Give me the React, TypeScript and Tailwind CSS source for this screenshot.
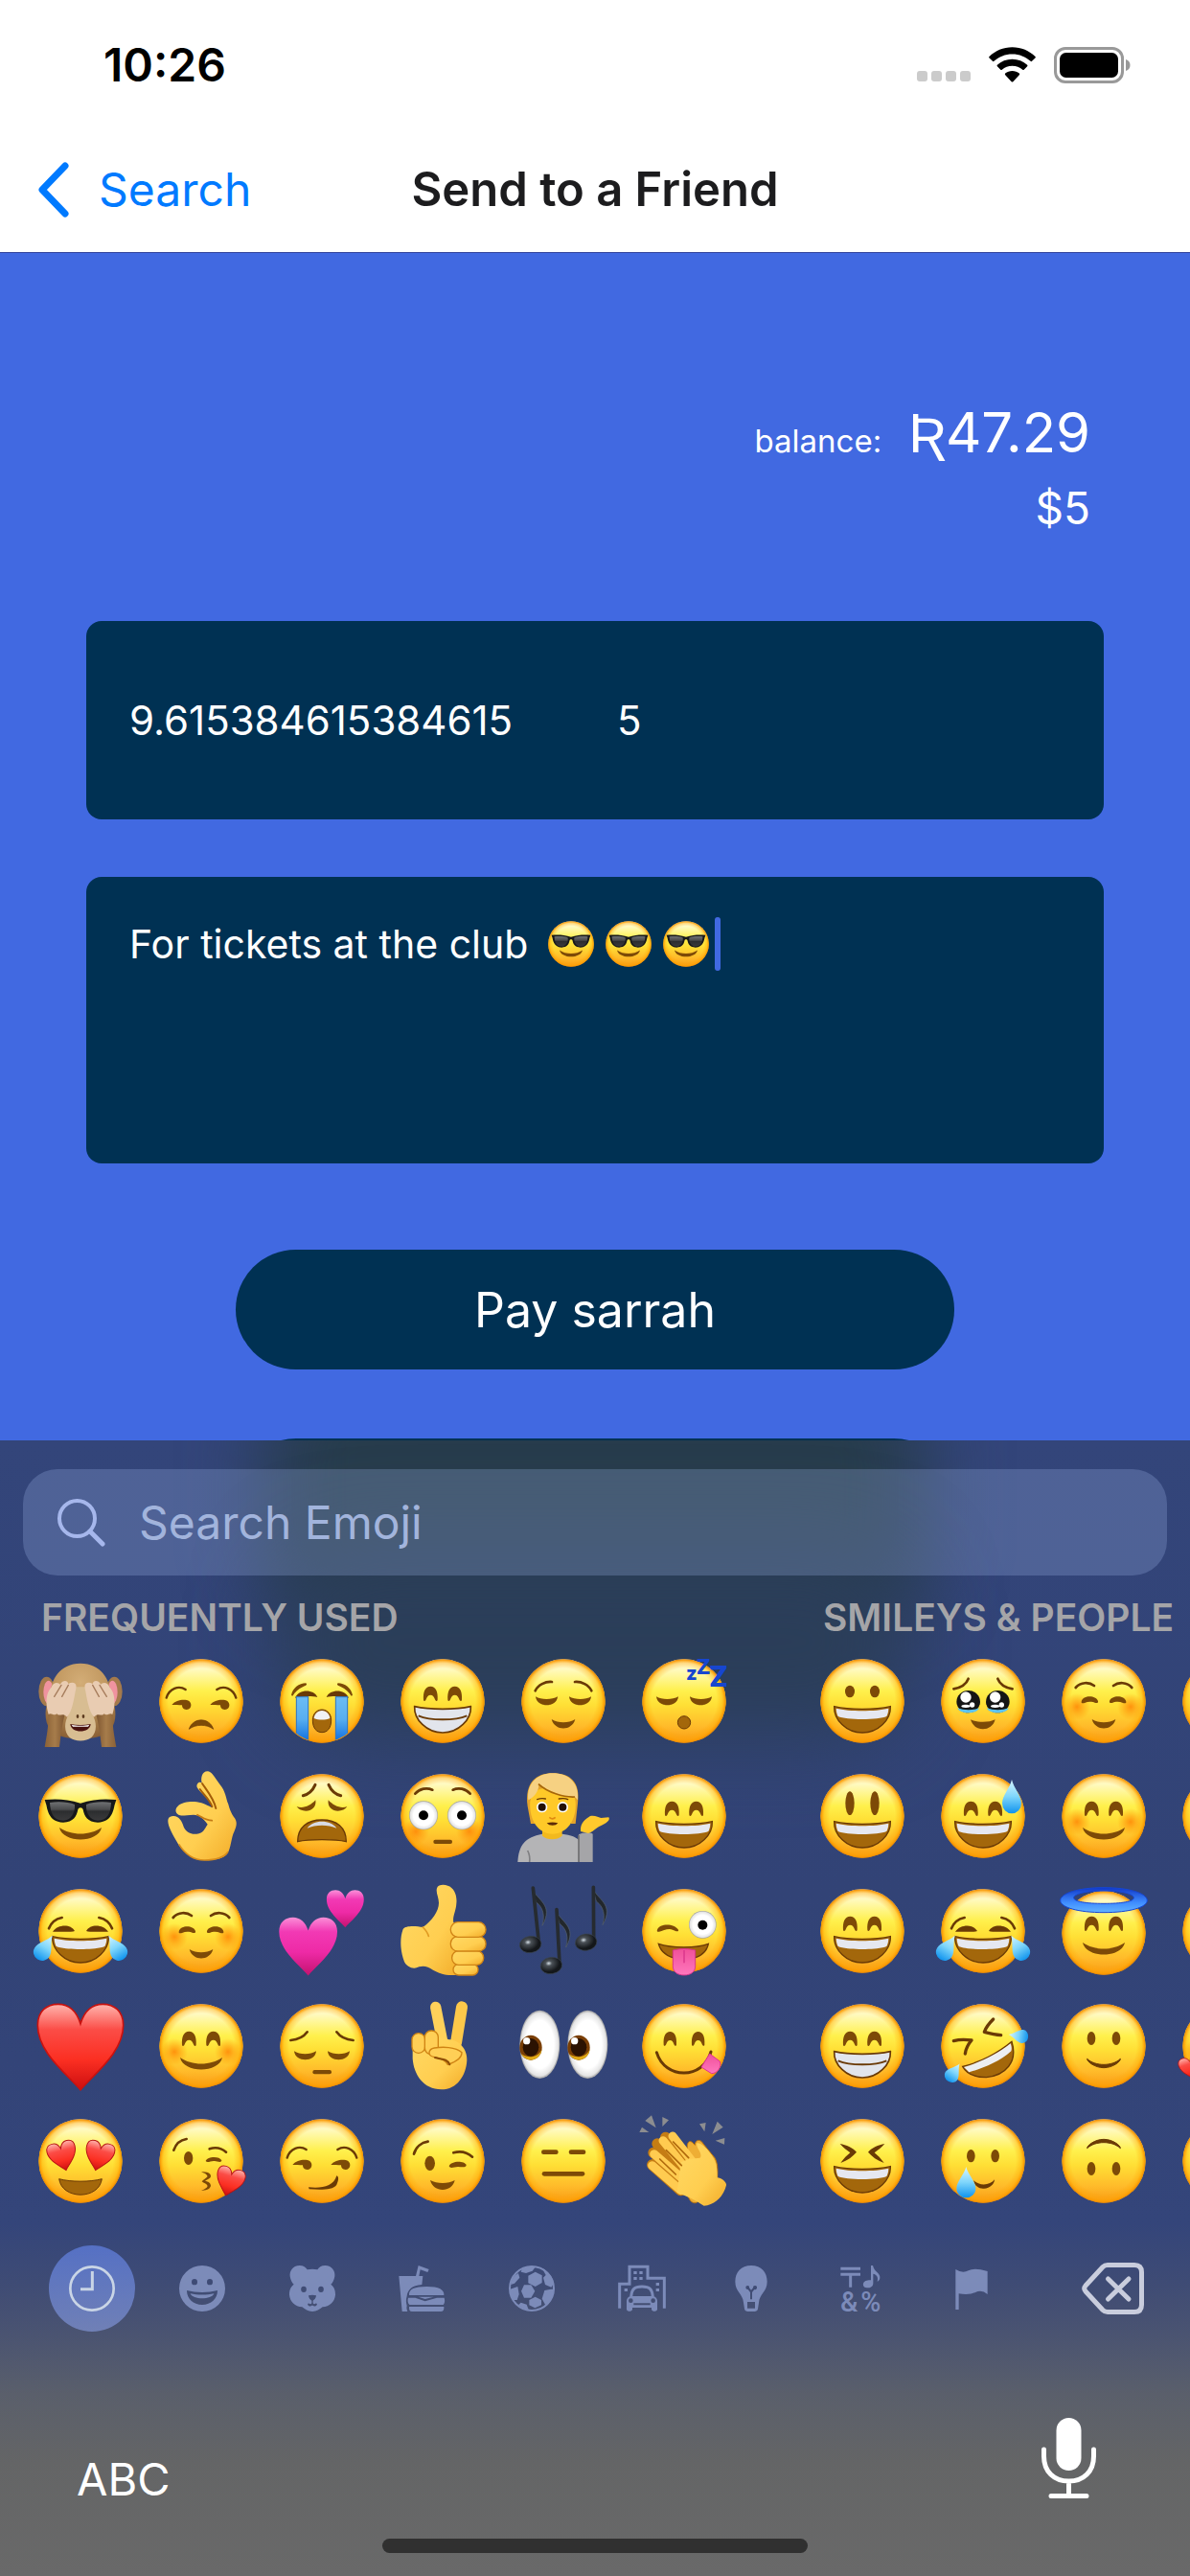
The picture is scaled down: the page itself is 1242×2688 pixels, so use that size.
import React from 'react';

/* ---------- shared drawing parts for the emoji (face radius 131, centred on 0,0) ---------- */

const BROWN = '#6a3a06';
const MOUTH = '#a3670b';

function EmojiDefs() {
  return (
    <svg aria-hidden="true" className="absolute size-0">
      <defs>
        <linearGradient id="face" x1="0" y1="0" x2="0" y2="1">
          <stop offset="0" stopColor="#fffbe0" />
          <stop offset="0.12" stopColor="#fffac0" />
          <stop offset="0.38" stopColor="#fff04c" />
          <stop offset="0.55" stopColor="#ffdf35" />
          <stop offset="0.8" stopColor="#ffbb2a" />
          <stop offset="1" stopColor="#f99a14" />
        </linearGradient>
        <radialGradient id="rim">
          <stop offset="0.78" stopColor="#ffa200" stopOpacity="0" />
          <stop offset="0.91" stopColor="#ffa400" stopOpacity="0.4" />
          <stop offset="0.97" stopColor="#fb9a00" stopOpacity="0.85" />
          <stop offset="1" stopColor="#dd8208" />
        </radialGradient>
        <radialGradient id="cheek">
          <stop offset="0" stopColor="#ff7a00" stopOpacity="0.75" />
          <stop offset="1" stopColor="#ff8a00" stopOpacity="0" />
        </radialGradient>
        <linearGradient id="tear" x1="0" y1="0" x2="0" y2="1">
          <stop offset="0" stopColor="#d8f6ff" />
          <stop offset="0.5" stopColor="#7fd6fb" />
          <stop offset="1" stopColor="#0f93ee" />
        </linearGradient>
        <linearGradient id="stream" x1="0" y1="0" x2="0" y2="1">
          <stop offset="0" stopColor="#6cbcf4" />
          <stop offset="0.5" stopColor="#58aef0" />
          <stop offset="1" stopColor="#0e6ee0" />
        </linearGradient>
        <linearGradient id="red" x1="0" y1="0" x2="0" y2="1">
          <stop offset="0" stopColor="#ffb5ae" />
          <stop offset="0.3" stopColor="#fb4c46" />
          <stop offset="0.65" stopColor="#fb2f22" />
          <stop offset="1" stopColor="#cc0f10" />
        </linearGradient>
        <linearGradient id="pink" x1="0" y1="0" x2="0" y2="1">
          <stop offset="0" stopColor="#fb8fd8" />
          <stop offset="0.25" stopColor="#f239b4" />
          <stop offset="0.6" stopColor="#ee2aa6" />
          <stop offset="1" stopColor="#c4136f" />
        </linearGradient>
        <linearGradient id="lens" x1="0" y1="0" x2="0" y2="1">
          <stop offset="0" stopColor="#6f7173" />
          <stop offset="0.4" stopColor="#4a4b4d" />
          <stop offset="0.5" stopColor="#2c2d2f" />
          <stop offset="1" stopColor="#3a3a3c" />
        </linearGradient>
        <linearGradient id="hand" x1="0" y1="0" x2="1" y2="1">
          <stop offset="0" stopColor="#ffd964" />
          <stop offset="0.6" stopColor="#ffce50" />
          <stop offset="1" stopColor="#f2ab28" />
        </linearGradient>
        <radialGradient id="eyeball">
          <stop offset="0.7" stopColor="#ffffff" />
          <stop offset="0.92" stopColor="#e4e4e4" />
          <stop offset="1" stopColor="#9b9b9b" />
        </radialGradient>
        <radialGradient id="note" cx="0.4" cy="0.35">
          <stop offset="0" stopColor="#d3dde4" />
          <stop offset="0.3" stopColor="#4b5157" />
          <stop offset="1" stopColor="#14171a" />
        </radialGradient>
        <radialGradient id="monkey" cx="0.5" cy="0.25" r="0.75">
          <stop offset="0" stopColor="#d3ad77" />
          <stop offset="0.45" stopColor="#c39a62" />
          <stop offset="1" stopColor="#8a6035" />
        </radialGradient>
        <linearGradient id="arm" x1="0" y1="0" x2="1" y2="0">
          <stop offset="0" stopColor="#8a6136" />
          <stop offset="0.5" stopColor="#a67c4b" />
          <stop offset="1" stopColor="#7d5530" />
        </linearGradient>
        <linearGradient id="halo" x1="0" y1="0" x2="0" y2="1">
          <stop offset="0" stopColor="#1138c8" />
          <stop offset="0.6" stopColor="#3f8dff" />
          <stop offset="1" stopColor="#62b4ff" />
        </linearGradient>
        <linearGradient id="tongue" x1="0" y1="0" x2="0" y2="1">
          <stop offset="0" stopColor="#f0509a" />
          <stop offset="1" stopColor="#ff77bd" />
        </linearGradient>
        <clipPath id="faceClip">
          <circle r="129" />
        </clipPath>
      </defs>
    </svg>
  );
}

const Face = () => (
  <>
    <circle r="131" fill="url(#face)" />
    <circle r="131" fill="url(#rim)" />
  </>
);

/* draws a child for the left side and its mirror image for the right side */
const Both = ({ children }: { children: React.ReactNode }) => (
  <>
    <g>{children}</g>
    <g transform="scale(-1 1)">{children}</g>
  </>
);

const Line = ({ d, w = 8 }: { d: string; w?: number }) => (
  <path d={d} fill="none" stroke={BROWN} strokeWidth={w} strokeLinecap="round" strokeLinejoin="round" />
);

const ArchEyes = () => (
  <Both>
    <path
      d="M-60 -4C-62 -30 -54 -46 -38 -46S-14 -30 -16 -4C-17 2 -22 1 -24 -5C-27 -14 -31 -19 -38 -19S-49 -14 -52 -5C-54 1 -59 2 -60 -4Z"
      fill="#7d4a07"
    />
  </Both>
);
const ClosedLids = () => (
  <Both>
    <path d="M-87 -14C-70 -3 -36 -3 -18 -14C-20 22 -84 22 -87 -14Z" fill="#7d4a07" />
  </Both>
);
const HappyLids = () => (
  <Both>
    <path d="M-70 2C-66 -18 -26 -20 -18 0C-16 10 -28 5 -34 3C-44 1 -52 2 -60 6C-66 8 -71 7 -70 2Z" fill="#7d4a07" />
  </Both>
);
const Cheeks = ({ y = 18, x = 84 }: { y?: number; x?: number }) => (
  <Both>
    <circle cx={-x} cy={y} r="42" fill="url(#cheek)" />
  </Both>
);
const SmallSmile = () => <path d="M-37 57C-15 70 15 70 37 57C27 95 -27 95 -37 57Z" fill="#7d4a07" />;
const WideSmile = () => <path d="M-66 36C-30 62 30 62 66 36C56 86 -56 86 -66 36Z" fill="#7d4a07" />;
const OpenMouth = () => (
  <>
    <path
      d="M-88 17C-40 28 40 28 88 17C90 58 50 99 0 99S-90 58 -88 17Z"
      fill={MOUTH}
      stroke={BROWN}
      strokeWidth="4"
    />
    <path d="M-82 23C-40 33 40 33 82 23C82 34 79 42 76 48C50 60 -50 60 -76 48C-79 42 -82 34 -82 23Z" fill="#e6e8f0" />
  </>
);
const Tear = () => <path d="M0 -40C6 -18 30 2 30 22A30 26 0 0 1 -30 22C-30 2 -6 -18 0 -40Z" fill="url(#tear)" />;
const HEART =
  'M0 137C-45 85 -134 20 -134 -65C-134 -110 -105 -131 -70 -131C-38 -131 -12 -110 0 -70C12 -110 38 -131 70 -131C105 -131 134 -110 134 -65C134 20 45 85 0 137Z';
const SideEyes = () => (
  <>
    <path d="M-92 12C-78 -6 -48 -6 -38 0C-28 8 -30 26 -46 27C-56 27 -60 20 -60 13C-70 12 -82 12 -92 12Z" fill="#7d4a07" />
    <path d="M28 12C42 -6 72 -6 82 0C92 8 90 26 74 27C64 27 60 20 60 13C50 12 38 12 28 12Z" fill="#7d4a07" />
  </>
);
const SoftBrows = () => (
  <Both>
    <Line d="M-88 -42C-72 -60 -46 -60 -30 -48" />
  </Both>
);

const drawings: Record<string, React.ReactNode> = {
  'See no evil': (
    <>
      <Both>
        <ellipse cx="-106" cy="-30" rx="25" ry="46" fill="#a47a4c" />
        <ellipse cx="-100" cy="-28" rx="16" ry="36" fill="#f0939f" />
      </Both>
      <path d="M0 -118C64 -118 94 -66 94 -20C110 10 118 60 95 88C60 130 -60 130 -95 88C-118 60 -110 10 -94 -20C-94 -66 -64 -118 0 -118Z" fill="url(#monkey)" />
      <path d="M-14 -44H14L36 40C54 70 50 100 34 114C18 128 -18 128 -34 114C-50 100 -54 70 -36 40Z" fill="#d8bd92" />
      <Both>
        <path d="M-112 144C-106 108 -98 74 -102 36L-48 36C-58 76 -62 110 -66 144Z" fill="url(#arm)" />
        <path d="M-100 42C-112 4 -106 -28 -92 -42C-84 -62 -68 -58 -64 -52C-54 -68 -40 -64 -38 -54C-24 -62 -10 -56 -14 -40C-20 -10 -26 34 -42 50C-56 34 -66 50 -74 40C-84 48 -92 34 -100 42Z" fill="#e9ccb2" />
        <path d="M-82 -14L-60 -50M-58 -14L-38 -50" stroke="#a67c5c" strokeWidth="4" fill="none" strokeLinecap="round" />
        <ellipse cx="-9" cy="48" rx="4" ry="6" fill="#5b3a1e" />
      </Both>
      <path d="M-32 72C-12 76 12 76 32 72C30 102 -30 102 -32 72Z" fill="#4a1210" />
      <path d="M-28 74C-12 78 12 78 28 74L24 80H-24Z" fill="#fff" />
    </>
  ),
  Unamused: (
    <>
      <Face />
      <Line d="M-109 -10C-100 -40 -70 -50 -49 -36" w={7} />
      <Line d="M109 -10C100 -40 70 -50 49 -36" w={7} />
      <SideEyes />
      <path d="M-38 88C-26 50 26 50 38 88C18 72 -18 72 -38 88Z" fill="#7d4a07" stroke={BROWN} strokeWidth="2" />
    </>
  ),
  'Loudly crying': (
    <>
      <Face />
      <Both>
        <path d="M-96 -18C-92 -40 -72 -56 -50 -56C-44 -50 -52 -48 -60 -44C-74 -38 -84 -28 -92 -16Z" fill="#7d4a07" />
        <path d="M-84 -10C-72 -38 -26 -38 -14 -12C-32 -16 -60 -16 -84 -10Z" fill={BROWN} />
        <rect x="-80" y="-13" width="37" height="140" fill="url(#stream)" stroke="#2b74c8" strokeWidth="3" clipPath="url(#faceClip)" />
      </Both>
      <path d="M0 27C18 27 29 42 29 60C29 86 16 98 0 98S-29 86 -29 60C-29 42 -18 27 0 27Z" fill={MOUTH} stroke={BROWN} strokeWidth="3" />
      <path d="M0 30C14 30 24 42 25 54C10 60 -10 60 -25 54C-24 42 -14 30 0 30Z" fill="#f0f1f4" />
    </>
  ),
  Beaming: (
    <>
      <Face />
      <ArchEyes />
      <path d="M-88 17C-40 28 40 28 88 17C90 58 50 99 0 99S-90 58 -88 17Z" fill="#e2e5ec" stroke={BROWN} strokeWidth="5" />
      <path d="M-76 46C-40 62 40 62 76 46" fill="none" stroke={BROWN} strokeWidth="6" />
    </>
  ),
  Relieved: (
    <>
      <Face />
      <Both>
        <Line d="M-88 -32C-80 -50 -56 -62 -36 -60" />
      </Both>
      <ClosedLids />
      <SmallSmile />
    </>
  ),
  Sleeping: (
    <>
      <Face />
      <ClosedLids />
      <circle cy="67" r="20" fill={MOUTH} stroke={BROWN} strokeWidth="3" />
      <g fill="#1746cf" fontFamily="Inter, sans-serif" fontWeight="800">
        <text x="6" y="-67" fontSize="60">z</text>
        <text x="38" y="-84" fontSize="66">Z</text>
        <text x="78" y="-44" fontSize="88">Z</text>
      </g>
    </>
  ),
  Sunglasses: (
    <>
      <Face />
      <path d="M-112 -51C-80 -54 -40 -54 0 -40C40 -54 80 -54 112 -51L108 -38C104 -30 104 20 54 20C22 20 12 0 8 -20C6 -28 -6 -28 -8 -20C-12 0 -22 20 -54 20C-104 20 -104 -30 -108 -38Z" fill="#17181a" />
      <Both>
        <path d="M-96 -42C-70 -46 -36 -44 -18 -36C-16 -10 -30 14 -54 14C-86 14 -94 -10 -96 -42Z" fill="url(#lens)" />
      </Both>
      <WideSmile />
    </>
  ),
  'OK hand': (
    <>
      <path
        fill="url(#hand)"
        d="M20 -140C32 -140 38 -126 65 -90C78 -70 80 -45 84 -40C90 -20 92 -12 106 8C114 22 110 34 100 56C92 80 92 108 78 122C60 137 30 138 4 138C-30 138 -56 112 -72 88C-88 60 -104 34 -104 16C-104 2 -94 0 -86 0C-70 0 -60 16 -55 34C-46 54 -30 58 -14 56C8 54 10 40 20 26C10 10 -6 -4 -24 -4C-44 -4 -56 0 -66 -2C-80 -6 -84 -20 -74 -30C-60 -44 -34 -46 -14 -44C6 -42 24 -30 36 -26C32 -50 -4 -72 -13 -90C-16 -100 -8 -110 2 -104C-2 -118 2 -140 20 -140Z"
      />
      <path d="M3 -102C18 -80 40 -54 46 -24M-4 -84C12 -62 26 -52 34 -30" stroke="#a35c08" strokeWidth="6" fill="none" strokeLinecap="round" />
      <path d="M-12 -4C4 4 14 14 34 14" stroke="#c57a14" strokeWidth="5" fill="none" strokeLinecap="round" />
      <path d="M-70 88C-50 120 -24 138 10 138S70 132 84 112" stroke="#d78d1c" strokeWidth="5" fill="none" />
    </>
  ),
  Weary: (
    <>
      <Face />
      <Both>
        <Line d="M-59 -64C-42 -68 -28 -82 -21 -98" w={9} />
        <path d="M-79 -30C-60 -22 -36 -32 -20 -50C-14 -10 -66 -8 -79 -30Z" fill="#7d4a07" />
      </Both>
      <path d="M-76 80C-76 36 -46 12 0 12S76 36 76 80C40 72 -40 72 -76 80Z" fill={MOUTH} stroke={BROWN} strokeWidth="4" />
      <path d="M-46 38C-28 10 28 10 46 38C20 26 -20 26 -46 38Z" fill="#d8dae4" />
    </>
  ),
  Flushed: (
    <>
      <Face />
      <Cheeks y={48} x={84} />
      <Both>
        <Line d="M-86 -70C-72 -86 -50 -90 -32 -82" />
        <circle cx="-60" cy="-2" r="45" fill="url(#eyeball)" />
        <circle cx="-60" cy="-2" r="15" fill="#000" />
      </Both>
      <rect x="-29" y="74" width="59" height="13" rx="6" fill="#7d4a07" />
    </>
  ),
  'Tipping hand': (
    <>
      <path d="M-143 144C-140 90 -120 66 -66 56H-4C50 62 72 84 72 144Z" fill="#b4b4b6" />
      <path d="M-106 144C-104 128 -108 116 -112 108" stroke="#7f7f82" strokeWidth="5" fill="none" />
      <path d="M48 144V58C60 50 84 50 92 56V144Z" fill="#a5a5a8" />
      <path d="M48 144V60" stroke="#6d6d70" strokeWidth="5" />
      <path d="M-66 36H-4V62C-20 76 -50 76 -66 62Z" fill="#f2b91e" />
      <path d="M-112 -30C-122 -106 -84 -134 -34 -134C22 -134 54 -106 45 -40L38 24H24L20 -20H-86L-90 24H-102Z" fill="#e5a42a" />
      <path d="M-104 -44C-100 -80 -70 -90 -34 -90C2 -90 34 -80 38 -44C42 14 10 56 -34 56S-108 14 -104 -44Z" fill="#ffc928" />
      <path d="M-110 -50C-116 -106 -76 -134 -34 -134C16 -134 50 -104 45 -50C40 -56 38 -60 34 -60C0 -60 -46 -76 -78 -102C-74 -86 -86 -66 -98 -58C-104 -54 -106 -52 -110 -50Z" fill="#f6d182" />
      <path d="M-78 -100C-50 -74 0 -58 36 -60" stroke="#a5650c" strokeWidth="5" fill="none" />
      <circle cx="-67" cy="-28" r="17" fill="#fff" />
      <circle cx="-2" cy="-28" r="17" fill="#fff" />
      <circle cx="-67" cy="-28" r="12" fill="#221104" />
      <circle cx="-2" cy="-28" r="12" fill="#221104" />
      <Line d="M-82 -52C-72 -56 -64 -56 -56 -54" w={4} />
      <Line d="M-14 -54C-4 -56 6 -56 14 -52" w={4} />
      <path d="M-52 22C-40 19 -28 19 -17 22C-24 32 -44 32 -52 22Z" fill="#5d2c08" />
      <path d="M-44 4C-38 9 -30 9 -25 4" stroke="#e08a10" strokeWidth="5" fill="none" />
      <path d="M54 48C52 20 70 10 84 0C96 -4 112 4 118 6L142 4C148 12 134 24 118 30C100 38 90 52 78 54Z" fill="#ffc92c" />
    </>
  ),
  Grinning: (
    <>
      <Face />
      <ArchEyes />
      <OpenMouth />
    </>
  ),
  'Tears of joy': (
    <>
      <Face />
      <Both>
        <Line d="M-99 -8C-92 -26 -78 -38 -58 -42" />
        <path d="M-87 2C-70 -22 -30 -22 -18 0C-30 4 -62 2 -87 2Z" fill={BROWN} />
      </Both>
      <OpenMouth />
      <Both>
        <g transform="translate(-109 48) rotate(32) scale(.9 1)">
          <Tear />
        </g>
      </Both>
    </>
  ),
  'Smiling softly': (
    <>
      <Face />
      <Cheeks />
      <SoftBrows />
      <HappyLids />
      <SmallSmile />
    </>
  ),
  'Two hearts': (
    <>
      <path d={HEART} transform="translate(-43 46) scale(.68)" fill="url(#pink)" />
      <path d={HEART} transform="translate(73 -71) scale(.435)" fill="url(#pink)" />
    </>
  ),
  'Thumbs up': (
    <>
      <path
        fill="url(#hand)"
        d="M-18 -134C-14 -146 4 -146 16 -142C36 -136 46 -112 43 -86C42 -62 30 -46 34 -26H60V134C20 144 -8 134 -30 122C-46 110 -60 108 -74 112C-92 122 -112 112 -120 96C-134 60 -134 20 -124 -6C-116 -18 -84 -16 -62 -12C-34 -32 -12 -62 -12 -88C-12 -106 -22 -120 -18 -134Z"
      />
      <g fill="url(#hand)" stroke="#d08416" strokeWidth="4">
        <rect x="33" y="104" width="78" height="34" rx="17" />
        <rect x="29" y="62" width="99" height="44" rx="21" />
        <rect x="25" y="17" width="110" height="46" rx="22" />
        <rect x="25" y="-28" width="110" height="47" rx="23" />
      </g>
      <path d="M-62 -12C-50 0 -46 8 -44 16" stroke="#e09a22" strokeWidth="5" fill="none" strokeLinecap="round" />
    </>
  ),
  'Musical notes': (
    <>
      {[
        { x: -103, y: 42, sx: 26, tx: 5, ty: -177 },
        { x: -38, y: 108, sx: 26, tx: 14, ty: -175 },
        { x: 71, y: 35, sx: 24, tx: 20, ty: -172 },
      ].map((n) => (
        <g key={n.x} transform={`translate(${n.x} ${n.y})`}>
          <path
            d={`M${n.tx} ${n.ty}C${n.tx + 14} ${n.ty + 40} ${n.tx + 70} ${n.ty + 50} ${n.tx + 32} ${n.ty + 118}C${n.tx + 46} ${n.ty + 70} ${n.tx + 20} ${n.ty + 50} ${n.tx + 12} ${n.ty + 44}Z`}
            fill="#22272c"
            stroke="#54606e"
            strokeWidth="2"
          />
          <path d={`M${n.tx + 3} ${n.ty}L${n.sx} -6`} stroke="#262b30" strokeWidth="11" strokeLinecap="round" />
          <ellipse rx="34" ry="26" transform="rotate(-8)" fill="url(#note)" stroke="#3b4550" strokeWidth="2" />
        </g>
      ))}
    </>
  ),
  'Winking with tongue': (
    <>
      <Face />
      <path d="M-84 -4C-78 -24 -32 -26 -18 -4C-16 4 -28 0 -36 -4C-50 -10 -66 0 -78 2C-84 3 -86 0 -84 -4Z" fill="#7d4a07" />
      <circle cx="58" cy="-20" r="43" fill="url(#eyeball)" />
      <circle cx="58" cy="-19" r="15" fill="#000" />
      <path d="M-80 40C-40 54 40 54 76 40C70 72 40 88 0 88S-72 72 -80 40Z" fill={MOUTH} stroke={BROWN} strokeWidth="4" />
      <path d="M-35 60C-12 54 12 54 35 60V110C35 128 20 138 0 138S-35 128 -35 110Z" fill="url(#tongue)" stroke="#d8338a" strokeWidth="3" />
      <path d="M0 60V100" stroke="#d8338a" strokeWidth="4" />
    </>
  ),
  'Red heart': <path d={HEART} fill="url(#red)" stroke="#c9120f" strokeWidth="5" />,
  Smiling: (
    <>
      <Face />
      <Cheeks />
      <ArchEyes />
      <WideSmile />
    </>
  ),
  Pensive: (
    <>
      <Face />
      <Both>
        <Line d="M-98 -18C-76 -20 -56 -30 -46 -44" />
        <path d="M-87 16C-70 28 -36 28 -18 16C-20 52 -84 52 -87 16Z" fill="#7d4a07" />
      </Both>
      <rect x="-29" y="75" width="59" height="13" rx="6" fill="#7d4a07" />
    </>
  ),
  Victory: (
    <>
      <path d="M-22 -122L-2 -20" stroke="#ffd15a" strokeWidth="34" strokeLinecap="round" />
      <path d="M60 -122L42 -10" stroke="#fdc84a" strokeWidth="36" strokeLinecap="round" />
      <path d="M-94 -10C-90 -30 -30 -40 20 -20C50 -20 78 10 76 44C74 90 46 136 -4 136C-60 136 -90 90 -94 40Z" fill="url(#hand)" />
      <g fill="#ffcf56" stroke="#cf8414" strokeWidth="4">
        <rect x="-96" y="-40" width="41" height="62" rx="20" />
        <rect x="-56" y="-48" width="42" height="74" rx="20" />
        <path d="M-26 6C-46 10 -48 30 -28 34C-8 40 8 42 16 58C40 50 60 40 60 20C40 2 0 2 -26 6Z" />
      </g>
      <path d="M-24 36C-6 42 14 38 22 58" stroke="#8d4d06" strokeWidth="6" fill="none" strokeLinecap="round" />
    </>
  ),
  Eyes: (
    <>
      {[-74, 76].map((x) => (
        <g key={x}>
          <ellipse cx={x} cy="-5" rx="63" ry="107" fill="url(#eyeball)" />
          <ellipse cx={x - 28} cy="5" rx="35" ry="39" fill="#7a3f06" />
          <path d={`M${x - 58} 24A35 39 0 0 0 ${x + 7} 10A40 36 0 0 1 ${x - 58} 24Z`} fill="#e0a914" />
          <ellipse cx={x - 28} cy="4" rx="25" ry="28" fill="#2b1202" />
          <circle cx={x - 41} cy="-16" r="11" fill="#fff" />
        </g>
      ))}
    </>
  ),
  Savoring: (
    <>
      <Face />
      <Both>
        <path d="M-64 -4C-66 -30 -58 -45 -44 -45S-22 -30 -24 -4C-26 2 -30 0 -32 -6C-35 -14 -38 -18 -44 -18S-53 -14 -56 -6C-58 0 -63 2 -64 -4Z" fill="#7d4a07" />
      </Both>
      <path d="M-86 20C-60 106 60 106 84 18" fill="none" stroke={BROWN} strokeWidth="9" strokeLinecap="round" />
      <path d="M80 24L112 48C118 66 104 86 86 86L54 66Z" fill="url(#tongue)" stroke="#e0348f" strokeWidth="3" />
    </>
  ),
  'Heart eyes': (
    <>
      <Face />
      <g stroke="#b81414" strokeWidth="9">
        <path d={HEART} transform="translate(-56 -16) rotate(-14) scale(.335)" fill="url(#red)" />
        <path d={HEART} transform="translate(58 -16) rotate(14) scale(.335)" fill="url(#red)" />
      </g>
      <path d="M-67 56C-30 66 30 66 67 56C58 122 -58 122 -67 56Z" fill={MOUTH} stroke={BROWN} strokeWidth="3" />
    </>
  ),
  'Blowing a kiss': (
    <>
      <Face />
      <Line d="M-86 -34C-80 -52 -66 -66 -46 -69" />
      <ellipse cx="-40" cy="-9" rx="14" ry="21" fill="#7d4a07" />
      <Line d="M26 -38C44 -44 64 -40 78 -28" />
      <path d="M14 0C20 -16 58 -16 64 -2C64 6 52 2 42 0C30 -2 20 8 14 0Z" fill="#7d4a07" />
      <path d="M0 34C20 34 30 38 30 48C28 56 18 58 12 62C22 64 30 68 30 78C26 90 14 92 0 92C12 88 18 84 20 78C16 70 8 70 2 64C8 56 16 54 20 48C16 40 10 38 0 34Z" fill="#7d4a07" />
      <path d={HEART} transform="translate(89 64) rotate(16) scale(.33)" fill="url(#red)" stroke="#b81414" strokeWidth="9" />
    </>
  ),
  Smirking: (
    <>
      <Face />
      <Line d="M-109 -10C-100 -40 -70 -50 -49 -36" w={7} />
      <Line d="M109 -10C100 -40 70 -50 49 -36" w={7} />
      <SideEyes />
      <path d="M-42 82C0 86 36 80 46 46C54 48 52 62 46 74C34 92 -6 90 -40 88Z" fill={BROWN} />
    </>
  ),
  Winking: (
    <>
      <Face />
      <Line d="M-90 -22C-84 -44 -66 -58 -46 -61" />
      <ellipse cx="-40" cy="7" rx="16" ry="23" fill="#7d4a07" />
      <Line d="M34 -26C54 -32 76 -28 93 -13" />
      <path d="M20 16C26 -2 68 -2 74 12C74 22 60 18 48 18C36 18 24 26 20 16Z" fill="#7d4a07" />
      <path d="M-39 60C-18 72 18 72 38 60C30 100 -30 100 -39 60Z" fill="#7d4a07" />
    </>
  ),
  Expressionless: (
    <>
      <Face />
      <g fill="#7d4a07">
        <rect x="-69" y="-35" width="53" height="14" rx="7" />
        <rect x="17" y="-35" width="53" height="14" rx="7" />
        <rect x="-67" y="33" width="134" height="14" rx="7" />
      </g>
    </>
  ),
  Clapping: (
    <>
      <path
        d="M-122 -126L-102 -143L-88 -104ZM-68 -138L-48 -128L-68 -108ZM-140 -90L-132 -106L-110 -90ZM48 -116L68 -120L64 -92ZM88 -84L104 -124L122 -106ZM98 -64L127 -72L126 -52Z"
        fill="#8c8d90"
      />
      <path d="M10 -50C14 -68 24 -62 34 -50C34 -68 52 -70 60 -54L96 -10C108 10 104 40 104 60L40 130C30 134 20 128 16 118L6 100Z" fill="#eeae34" stroke="#b87310" strokeWidth="3" />
      <g stroke="#c57d14" strokeWidth="34" strokeLinecap="round">
        <path d="M-100 12L-10 92M-96 -26L0 60M-84 -54L10 40M-58 -74L30 30" />
      </g>
      <g stroke="#ffcb50" strokeWidth="27" strokeLinecap="round">
        <path d="M-100 14L-10 92M-94 -22L0 60M-66 -64L10 30M-36 -78L40 20" />
      </g>
      <path d="M-10 4L14 -6L50 -10C60 -24 36 -40 40 -56C56 -60 94 -18 100 10C104 30 104 44 104 52C116 52 134 66 132 76C126 104 100 138 62 140C40 124 10 110 -22 98Z" fill="url(#hand)" />
      <path d="M-56 -34L-8 14M-34 -60L14 -10M-76 -6L-26 42" stroke="#b06a0c" strokeWidth="5" strokeLinecap="round" />
    </>
  ),
  'Grinning face': (
    <>
      <Face />
      <Both>
        <ellipse cx="-39" cy="-30" rx="15" ry="19" fill="#7d4a07" />
      </Both>
      <OpenMouth />
    </>
  ),
  'Holding back tears': (
    <>
      <Face />
      <Both>
        <Line d="M-92 -38C-70 -42 -52 -54 -46 -70" />
        <ellipse cx="-46" cy="2" rx="37" ry="35" fill="#151515" />
        <path d="M-80 22C-60 30 -32 30 -12 22C-18 42 -74 42 -80 22Z" fill="#5cc4f2" />
      </Both>
      {[-54, 38].map((x) => (
        <g key={x} fill="#fff">
          <circle cx={x} cy="-12" r="17" />
          <circle cx={x + 20} cy="12" r="8" />
          <ellipse cx={x} cy="16" rx="14" ry="5" />
        </g>
      ))}
      <path d="M-39 58C-18 68 18 68 38 58C28 98 -28 98 -39 58Z" fill="#7d4a07" />
    </>
  ),
  'Big eyes grin': (
    <>
      <Face />
      <Both>
        <ellipse cx="-39" cy="-40" rx="14" ry="37" fill="#7d4a07" />
      </Both>
      <OpenMouth />
    </>
  ),
  'Grinning with sweat': (
    <>
      <Face />
      <ArchEyes />
      <OpenMouth />
      <g transform="translate(90 -66) scale(1 1.2)">
        <Tear />
      </g>
    </>
  ),
  Halo: (
    <>
      <g transform="translate(0 6)">
        <Face />
      </g>
      <ArchEyes />
      <WideSmile />
      <path
        fillRule="evenodd"
        d="M0 -136C80 -136 136 -118 136 -96S80 -58 0 -58S-136 -74 -136 -96S-80 -136 0 -136ZM0 -126C-54 -126 -94 -116 -94 -104S-54 -86 0 -86S94 -92 94 -104S54 -126 0 -126Z"
        fill="url(#halo)"
        stroke="#1546d6"
        strokeWidth="3"
      />
    </>
  ),
  Rolling: (
    <>
      <Face />
      <Line d="M-92 -16C-70 -22 -50 -20 -36 -18C-48 -4 -54 8 -56 24" w={10} />
      <Line d="M32 -84C18 -70 8 -56 4 -44C20 -40 36 -36 56 -34" w={10} />
      <path d="M-64 64C-10 52 50 20 90 -14C110 50 70 92 10 98C-26 98 -52 86 -64 64Z" fill={MOUTH} stroke={BROWN} strokeWidth="4" />
      <path d="M-60 66C-10 52 50 22 86 -8C90 2 90 10 88 16C50 50 0 70 -44 82Z" fill="#eceef2" />
      <g transform="translate(-90 80) rotate(34) scale(.75)">
        <Tear />
      </g>
      <g transform="translate(108 -32) rotate(-82) scale(.7)">
        <Tear />
      </g>
    </>
  ),
  'Slight smile': (
    <>
      <Face />
      <Both>
        <ellipse cx="-39" cy="-24" rx="13" ry="21" fill="#7d4a07" />
      </Both>
      <path d="M-52 40C-26 64 26 64 52 40C54 48 28 68 0 68S-54 48 -52 40Z" fill={BROWN} stroke={BROWN} strokeWidth="3" />
    </>
  ),
  Squinting: (
    <>
      <Face />
      <Both>
        <path d="M-70 -54C-50 -50 -30 -42 -18 -28C-30 -14 -46 -2 -68 6C-58 -8 -48 -18 -38 -26C-48 -34 -60 -42 -70 -54Z" fill={BROWN} />
      </Both>
      <OpenMouth />
    </>
  ),
  'Smiling with tear': (
    <>
      <Face />
      <Both>
        <ellipse cx="-38" cy="-16" rx="13" ry="20" fill="#7d4a07" />
      </Both>
      <path d="M-30 60C-10 80 22 76 36 58C36 72 20 88 0 86C-14 86 -26 78 -30 60Z" fill={BROWN} />
      <g transform="translate(-53 62) scale(1 1.1)">
        <Tear />
      </g>
    </>
  ),
  'Upside down': (
    <>
      <Face />
      <Both>
        <ellipse cx="-39" cy="24" rx="13" ry="21" fill="#7d4a07" />
      </Both>
      <path d="M-52 -40C-26 -64 26 -64 52 -40C54 -48 28 -68 0 -68S-54 -48 -52 -40Z" fill={BROWN} stroke={BROWN} strokeWidth="3" />
    </>
  ),
  'Smiling with hearts': (
    <>
      <Face />
      <Cheeks />
      <ArchEyes />
      <WideSmile />
      <path d={HEART} transform="translate(-102 68) rotate(-18) scale(.28)" fill="url(#red)" stroke="#b81414" strokeWidth="9" />
      <path d={HEART} transform="translate(96 74) rotate(14) scale(.26)" fill="url(#red)" stroke="#b81414" strokeWidth="9" />
      <path d={HEART} transform="translate(90 -88) rotate(12) scale(.26)" fill="url(#red)" stroke="#b81414" strokeWidth="9" />
    </>
  ),
};

function Emoji({ name, className }: { name: string; className: string }) {
  return (
    <svg viewBox="-165 -165 330 330" aria-hidden="true" className={className}>
      {drawings[name]}
    </svg>
  );
}

const frequent = [
  'See no evil', 'Unamused', 'Loudly crying', 'Beaming', 'Relieved', 'Sleeping',
  'Sunglasses', 'OK hand', 'Weary', 'Flushed', 'Tipping hand', 'Grinning',
  'Tears of joy', 'Smiling softly', 'Two hearts', 'Thumbs up', 'Musical notes', 'Winking with tongue',
  'Red heart', 'Smiling', 'Pensive', 'Victory', 'Eyes', 'Savoring',
  'Heart eyes', 'Blowing a kiss', 'Smirking', 'Winking', 'Expressionless', 'Clapping',
];
const smileys = [
  'Grinning face', 'Holding back tears', 'Smiling softly', 'Winking',
  'Big eyes grin', 'Grinning with sweat', 'Smiling', 'Relieved',
  'Grinning', 'Tears of joy', 'Halo', 'Heart eyes',
  'Beaming', 'Rolling', 'Slight smile', 'Smiling with hearts',
  'Squinting', 'Smiling with tear', 'Upside down', 'Blowing a kiss',
];

function EmojiSection({ title, names, grid }: { title: string; names: string[]; grid: string }) {
  return (
    <section className="shrink-0">
      <h2 className="flex h-[71px] items-center pt-4 pl-[22px] text-[39px] leading-none font-semibold whitespace-nowrap text-[#a5a5a8]">
        {title}
      </h2>
      <div className={grid}>
        {names.map((name) => (
          <button key={name} type="button" aria-label={name} className="grid h-[120px] place-items-center">
            <Emoji name={name} className="size-[110px] overflow-visible" />
          </button>
        ))}
      </div>
    </section>
  );
}

/* ---------- keyboard category icons, on a 144-unit square ---------- */

const categories: { label: string; icon: React.ReactNode }[] = [
  {
    label: 'Recent',
    icon: (
      <g fill="none" stroke="currentColor" strokeWidth="8">
        <circle cx="72" cy="72" r="68" />
        <path d="M73 18V74H36" strokeWidth="9" />
      </g>
    ),
  },
  {
    label: 'Smileys and people',
    icon: (
      <path
        fillRule="evenodd"
        d="M72 0A72 72 0 1 1 72 144A72 72 0 1 1 72 0ZM48 42A9 9.500 0 1 0 48 61A9 9.500 0 1 0 48 42ZM96 42A9 9.500 0 1 0 96 61A9 9.500 0 1 0 96 42ZM24 78C24 104 44 123 72 123S120 104 120 78C90 86 54 86 24 78ZM35 88C58 93 86 93 109 88C102 108 42 108 35 88Z"
      />
    ),
  },
  {
    label: 'Animals and nature',
    icon: (
      <path
        fillRule="evenodd"
        d="M32 0C44 0 52 6 56 13Q72 10 88 13C92 6 100 0 112 0C134 0 144 18 142 34C140 46 136 54 130 59C142 68 144 80 144 92C142 114 126 128 104 130C94 138 86 144 72 144S50 138 40 130C18 128 2 114 0 92C0 80 2 68 14 59C8 54 4 46 2 34C0 18 10 0 32 0ZM45 65A8 9 0 1 0 45 84A8 9 0 1 0 45 65ZM99 65A8 9 0 1 0 99 84A8 9 0 1 0 99 65ZM60 94C60 102 66 108 70 110V118C68 122 64 122 60 118L57 122C62 130 70 128 72 124C74 128 82 130 87 122L84 118C80 122 76 122 74 118V110C78 108 84 102 84 94Q72 91 60 94Z"
      />
    ),
  },
  {
    label: 'Food and drink',
    icon: (
      <>
        <path d="M1 33H54L62 0L95 12L91 21L68 13L64 33H76L73 60C42 62 28 76 26 96C22 108 24 118 26 126C24 134 26 138 28 144H11Z" />
        <path d="M33 93C31 74 50 66 88 66S144 76 142 93ZM30 101H52L83 112L120 101H143C146 110 144 118 140 123H34C28 118 28 108 30 101ZM62 98L83 105L110 98ZM33 129H142C143 138 140 144 132 144H42C35 144 32 138 33 129Z" />
      </>
    ),
  },
  {
    label: 'Activity',
    icon: (
      <>
        <circle cx="72" cy="72" r="69" fill="none" stroke="currentColor" strokeWidth="6" />
        <path d="M83 20L104 31V54L83 66L61 55V32Z" />
        <path d="M48 61H70L82 80L70 101H48L39 80Z" />
        <path d="M83 98L102 108V124L82 133L64 124V108Z" />
        <path d="M42 10C56 2 72 0 84 4L74 17L54 24L38 20Z" />
        <path d="M104 8C124 18 138 36 141 56L133 68L114 60L108 38L116 30Z" />
        <path d="M112 78L132 74L142 74C140 96 130 114 116 126L104 104Z" />
        <path d="M30 24L34 38L18 56L6 60C8 44 16 32 30 24Z" />
        <path d="M4 74L28 66L32 90L26 108L14 108C6 98 3 86 4 74Z" />
        <path d="M38 116L56 122L62 138C50 138 38 132 30 124Z" />
      </>
    ),
  },
  {
    label: 'Travel and places',
    icon: (
      <>
        <path d="M2 134V58H33V4H90V40H142V134" fill="none" stroke="currentColor" strokeWidth="9" />
        <path d="M46 18h10v9h-10zM64 18h10v9h-10zM46 36h10v9h-10zM64 36h10v9h-10zM17 72h10v9h-10zM116 54h10v9h-10zM116 72h10v9h-10z" />
        <path d="M38 98C40 74 48 66 72 66S104 74 106 98" fill="none" stroke="currentColor" strokeWidth="9" />
        <path
          fillRule="evenodd"
          d="M36 96H108C116 98 120 104 120 112V138C118 145 104 145 102 138V132H42V138C40 145 26 145 24 138V112C24 104 28 98 36 96ZM37 103A7 7 0 1 0 37 117A7 7 0 1 0 37 103ZM107 103A7 7 0 1 0 107 117A7 7 0 1 0 107 103ZM46 118V124H98V118Z"
        />
      </>
    ),
  },
  {
    label: 'Objects',
    icon: (
      <path
        fillRule="evenodd"
        d="M72 0C104 0 122 22 122 50C122 82 98 88 96 116L93 136C92 142 88 144 82 144H62C56 144 52 142 51 136L48 116C46 88 22 82 22 50C22 22 40 0 72 0ZM60 63A6 6 0 1 0 62 75L69 84V106H75V84L82 75A6 6 0 1 0 78 70L72 77L66 70A6 6 0 0 0 60 63ZM60 114V134H84V114Z"
      />
    ),
  },
  {
    label: 'Symbols',
    icon: (
      <>
        <path d="M7 10H69M7 28H69M38 28V68" fill="none" stroke="currentColor" strokeWidth="9" />
        <path d="M102 0H108C112 20 132 24 130 38C130 44 126 48 122 50C126 34 118 28 109 26V56C108 66 100 70 92 70C82 70 76 64 78 56C82 46 94 46 102 46Z" />
        <g fontSize="86" fontFamily="Roboto, sans-serif" fontWeight="500">
          <text x="6" y="144">&amp;</text>
          <text x="70" y="144">%</text>
        </g>
      </>
    ),
  },
  {
    label: 'Flags',
    icon: <path d="M22 12Q44 26 62 16T122 18V90Q104 74 84 84T32 88V138H22Z" />,
  },
];

const field = 'bg-transparent text-white outline-none';

export default function App() {
  return (
    <div className="flex min-h-screen w-full flex-col overflow-hidden bg-[#4169e1] font-['Inter','Liberation_Sans',sans-serif]">
      <EmojiDefs />

      <header className="border-b border-[#33459c] bg-white">
        <div className="flex h-[136px] items-center justify-between pr-[62px] pl-[108px]">
          <span className="text-[48px] leading-none font-semibold text-black">10:26</span>
          <div className="flex h-[38px] items-end gap-[19px]">
            <div className="flex gap-1 pb-0.5">
              <span className="size-[11px] rounded-[3px] bg-[#cbcbcb]" />
              <span className="size-[11px] rounded-[3px] bg-[#cbcbcb]" />
              <span className="size-[11px] rounded-[3px] bg-[#cbcbcb]" />
              <span className="size-[11px] rounded-[3px] bg-[#cbcbcb]" />
            </div>
            <svg viewBox="0 0 47 36" className="h-[38px] w-[49px]" aria-hidden="true">
              <path d="M23.500 0C32.500 0 40.500 3.500 46.500 9.300Q47.200 10 46.500 10.700L43.200 14Q42.500 14.700 41.800 14C36.800 9.500 30.500 7 23.500 7S10.200 9.500 5.200 14Q4.500 14.700 3.800 14L.5 10.700Q-.2 10 .5 9.300C6.500 3.500 14.500 0 23.500 0Z" />
              <path d="M23.500 12C29.300 12 34.500 14.200 38.500 17.800Q39.200 18.500 38.500 19.200L35.200 22.500Q34.500 23.200 33.800 22.500C31 20.200 27.500 18.800 23.500 18.800S16 20.200 13.200 22.500Q12.500 23.200 11.800 22.500L8.500 19.200Q7.800 18.500 8.500 17.800C12.500 14.200 17.700 12 23.500 12Z" />
              <path d="M23.500 23.700C26.200 23.700 28.600 24.600 30.500 26.200Q31.300 27 30.500 27.800L24.300 34.500Q23.500 35.300 22.700 34.500L16.500 27.800Q15.700 27 16.500 26.200C18.400 24.600 20.800 23.700 23.500 23.700Z" />
            </svg>
            <svg viewBox="0 0 80 38" className="h-[38px] w-[80px]" aria-hidden="true">
              <rect x="1.500" y="1.500" width="70" height="35" rx="10.500" fill="none" stroke="#999" strokeWidth="3" />
              <rect x="6" y="6" width="61" height="26" rx="6.500" />
              <path d="M75 13C78 14 79.500 16 79.500 19S78 24 75 25Z" fill="#999" />
            </svg>
          </div>
        </div>
        <nav className="grid h-[127px] grid-cols-[1fr_auto_1fr] items-center pb-1">
          <a href="#search" className="flex items-center gap-[31px] pl-[38px] text-[48px] leading-none text-[#007aff]">
            <svg viewBox="0 0 34 58" className="h-[58px] w-[34px]" aria-hidden="true">
              <path d="M30 4L6 29L30 54" fill="none" stroke="currentColor" strokeWidth="7" strokeLinecap="round" strokeLinejoin="round" />
            </svg>
            Search
          </a>
          <h1 className="text-[49px] leading-none font-semibold text-[#1c1c1e]">Send to a Friend</h1>
        </nav>
      </header>

      <main className="flex flex-1 flex-col px-[90px] pt-[150px]">
        <div className="flex flex-col pr-3.5 text-right text-white">
          <p className="flex h-[74px] items-baseline justify-end gap-7">
            <span className="text-[33px] leading-[74px]">balance:</span>
            <span className="text-[58px] leading-[74px]">
              <span className="font-['Liberation_Sans','DejaVu_Sans',sans-serif]">Ʀ</span>47.29
            </span>
          </p>
          <p className="mt-2.5 text-[46px] leading-[64px]">$5</p>
        </div>

        <form className="mt-[86px] flex flex-col">
          <div className="grid h-[207px] grid-cols-[509px_1fr] items-center rounded-2xl bg-[#003153] px-[45px] text-[42px] leading-[50px]">
            <input aria-label="Amount in coins" defaultValue="9.615384615384615" className={`${field} w-full`} />
            <input aria-label="Amount in dollars" defaultValue="5" className={`${field} w-full`} />
          </div>

          <label className="mt-[60px] flex h-[299px] items-start rounded-2xl bg-[#003153] px-[45px] pt-10 text-[41px]">
            <textarea
              aria-label="Note"
              rows={1}
              defaultValue="For tickets at the club"
              className={`${field} field-sizing-content resize-none overflow-hidden leading-[60px]`}
            />
            <span className="flex items-center pl-[15px]">
              <Emoji name="Sunglasses" className="size-[60px]" />
              <Emoji name="Sunglasses" className="size-[60px]" />
              <Emoji name="Sunglasses" className="size-[60px]" />
              <span className="h-[56px] w-1.5 rounded-full bg-[#4169e1]" />
            </span>
          </label>

          <button type="button" className="mx-auto mt-[90px] h-[125px] w-[750px] rounded-full bg-[#003153] text-[50px] leading-none text-white">
            Pay sarrah
          </button>
          <div className="mt-[72px] h-0.5 overflow-hidden">
            <button type="button" aria-label="Cancel" className="mx-auto block h-[126px] w-[750px] rounded-full bg-[#003153]" />
          </div>
        </form>
      </main>

      <section
        aria-label="Emoji keyboard"
        className="relative isolate overflow-hidden bg-[linear-gradient(to_bottom,#33457a_0%,#324376_40%,#34457a_69%,#3e4b75_74%,#4b5471_79%,#5a5f6b_84%,#646566_90%,#696969_100%)]"
      >
        <div className="absolute -top-20 left-1/2 -z-10 h-[270px] w-[690px] -translate-x-1/2 rounded-[80px] bg-[#273c4c] blur-[40px]" />
        <div className="absolute top-[110px] left-1/2 -z-10 h-[200px] w-[660px] -translate-x-1/2 rounded-[80px] bg-[#2b3e59] blur-[44px]" />

        <label className="mx-6 mt-[30px] flex h-[111px] items-center gap-[35px] rounded-[36px] bg-[#a4bcf0]/25 pl-9 text-[#a6b7ec]">
          <svg viewBox="0 0 50 50" className="size-[50px]" aria-hidden="true">
            <circle cx="20.500" cy="20.500" r="18.500" fill="none" stroke="currentColor" strokeWidth="4" />
            <path d="M34 34L47 47" stroke="currentColor" strokeWidth="5" strokeLinecap="round" />
          </svg>
          <input
            type="search"
            aria-label="Search Emoji"
            placeholder="Search Emoji"
            className="h-full flex-1 bg-transparent text-[48px] outline-none placeholder:text-[#a2b4dc]"
          />
        </label>

        <div className="flex gap-[60px] overflow-hidden pl-[21px]">
          <EmojiSection title="FREQUENTLY USED" names={frequent} grid="grid grid-cols-[repeat(6,126px)]" />
          <EmojiSection title="SMILEYS & PEOPLE" names={smileys} grid="grid grid-cols-[repeat(4,126px)]" />
        </div>

        <div className="mt-7 flex items-center pr-12 pl-[39px]">
          <div className="grid flex-1 grid-cols-9 pr-[58px]">
            {categories.map((c, i) => (
              <button
                key={c.label}
                type="button"
                aria-label={c.label}
                className={
                  i === 0
                    ? 'mx-auto grid size-[90px] place-items-center rounded-full bg-linear-to-b from-[#5570c4] to-[#7080b6] text-[#c9d5e6]'
                    : 'mx-auto grid size-[90px] place-items-center rounded-full text-[#7c8bb9]'
                }
              >
                <svg viewBox="0 0 144 144" fill="currentColor" className="size-12 overflow-visible" aria-hidden="true">
                  {c.icon}
                </svg>
              </button>
            ))}
          </div>
          <button type="button" aria-label="Delete" className="text-[#c9cddd]">
            <svg viewBox="0 0 65 54" className="h-[54px] w-[65px]" fill="none" stroke="currentColor" strokeWidth="5" strokeLinecap="round" strokeLinejoin="round" aria-hidden="true">
              <path d="M27 2.500H55Q62.500 2.500 62.500 10V44Q62.500 51.500 55 51.500H27Q24 51.500 22 49.500L4 30Q1.500 27 4 24L22 4.500Q24 2.500 27 2.500Z" />
              <path d="M27.500 17L49 38M49 17L27.500 38" />
            </svg>
          </button>
        </div>

        <div className="flex items-end justify-between pt-[90px] pr-[98px] pl-20 text-white">
          <button type="button" className="text-[47px] leading-[40px]">
            ABC
          </button>
          <button type="button" aria-label="Dictate">
            <svg viewBox="0 0 57 84" className="h-[84px] w-[57px]" aria-hidden="true">
              <rect x="15.500" width="26" height="55" rx="13" fill="currentColor" />
              <path d="M2.500 33V40C2.500 56 13 66 28.500 66S54.500 56 54.500 40V33M28.500 66V81M10 81.500H47" fill="none" stroke="currentColor" strokeWidth="5" strokeLinecap="round" />
            </svg>
          </button>
        </div>
        <div className="mx-auto mt-[42px] mb-6 h-[15px] w-[444px] rounded-full bg-[#303030]" />
      </section>
    </div>
  );
}
